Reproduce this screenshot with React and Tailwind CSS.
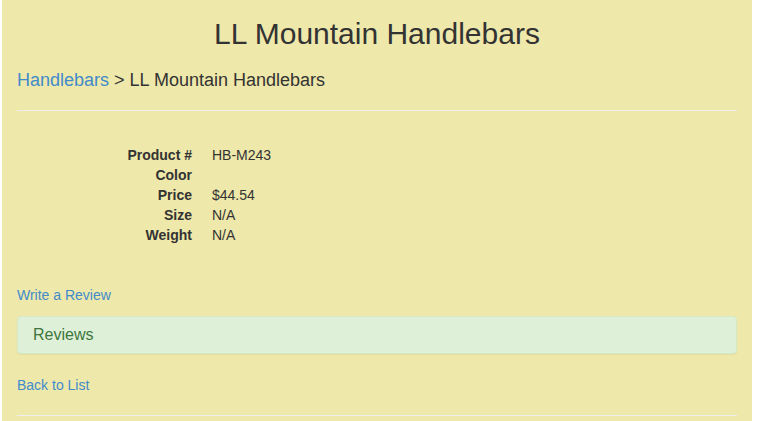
import React from 'react';

const details = [
    { label: 'Product #', value: 'HB-M243' },
    { label: 'Color', value: '' },
    { label: 'Price', value: '$44.54' },
    { label: 'Size', value: 'N/A' },
    { label: 'Weight', value: 'N/A' },
];

const App = () => {
    return (
        <div className="min-h-[421px] bg-white font-['Liberation_Sans',Arial,sans-serif] text-[14px] leading-[20px] text-[#333333]">
            <div className="ml-[2px] w-[750px] min-h-[421px] bg-[#eee8aa] px-[15px]">
                {/* Title */}
                <h2 className="pt-[17px] text-center text-[30px] leading-[33px] font-normal">LL Mountain Handlebars</h2>

                {/* Breadcrumb */}
                <h4 className="mt-[20px] text-[18px] leading-[20px] font-normal">
                    <a href="#" className="text-[#428bca]">Handlebars</a> &gt; LL Mountain Handlebars
                </h4>

                <hr className="mt-[20px] border-0 border-t border-[#eeeeee]" />

                {/* Details */}
                <dl className="mt-[34px] ml-[15px]">
                    {details.map(row => (
                        <div key={row.label} className="flex h-[20px]">
                            <dt className="w-[160px] text-right font-bold">{row.label}</dt>
                            <dd className="ml-[20px]">{row.value}</dd>
                        </div>
                    ))}
                </dl>

                <p className="mt-[40px]">
                    <a href="#" className="text-[#428bca]">Write a Review</a>
                </p>

                {/* Reviews panel */}
                <div className="mt-[11px] h-[38px] rounded-[4px] border border-[#d6e9c6] bg-[#dff0d8] px-[15px] py-[9px] shadow-[0_1px_1px_rgba(0,0,0,0.05)]">
                    <h3 className="text-[16px] leading-[18px] text-[#3c763d]">Reviews</h3>
                </div>

                <p className="mt-[21px]">
                    <a href="#" className="text-[#428bca]">Back to List</a>
                </p>

                <hr className="mt-[20px] border-0 border-t border-[#eeeeee]" />
            </div>
        </div>
    );
};

export default App;
